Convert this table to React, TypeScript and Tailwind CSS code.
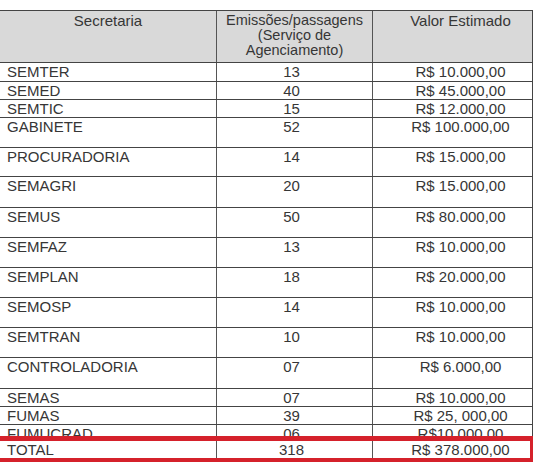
const rows: { name: string; qty: string; value: string; h: string }[] = [
  { name: "SEMTER", qty: "13", value: "R$ 10.000,00", h: "h-[19px]" },
  { name: "SEMED", qty: "40", value: "R$ 45.000,00", h: "h-[18px]" },
  { name: "SEMTIC", qty: "15", value: "R$ 12.000,00", h: "h-[18px]" },
  { name: "GABINETE", qty: "52", value: "R$ 100.000,00", h: "h-[30px]" },
  { name: "PROCURADORIA", qty: "14", value: "R$ 15.000,00", h: "h-[29px]" },
  { name: "SEMAGRI", qty: "20", value: "R$ 15.000,00", h: "h-[31px]" },
  { name: "SEMUS", qty: "50", value: "R$ 80.000,00", h: "h-[30px]" },
  { name: "SEMFAZ", qty: "13", value: "R$ 10.000,00", h: "h-[30px]" },
  { name: "SEMPLAN", qty: "18", value: "R$ 20.000,00", h: "h-[30px]" },
  { name: "SEMOSP", qty: "14", value: "R$ 10.000,00", h: "h-[30px]" },
  { name: "SEMTRAN", qty: "10", value: "R$ 10.000,00", h: "h-[30px]" },
  { name: "CONTROLADORIA", qty: "07", value: "R$ 6.000,00", h: "h-[31px]" },
  { name: "SEMAS", qty: "07", value: "R$ 10.000,00", h: "h-[18px]" },
  { name: "FUMAS", qty: "39", value: "R$ 25, 000,00", h: "h-[18px]" },
  { name: "FUMUCRAD", qty: "06", value: "R$10.000,00", h: "h-[16px]" },
  { name: "TOTAL", qty: "318", value: "R$ 378.000,00", h: "h-[19px]" },
]

function Row({ name, qty, value, h }: { name: string; qty: string; value: string; h: string }) {
  return (
    <div className={`flex ${h} overflow-hidden border-b border-[#444]`}>
      <div className="w-[217px] shrink-0 border-r border-[#555] pl-[7px] pt-[1px]">{name}</div>
      <div className="w-[156px] shrink-0 border-r border-[#555] pr-[6px] pt-[1px] text-center">{qty}</div>
      <div className="flex-1 pl-[16px] pt-[1px] text-center">{value}</div>
    </div>
  )
}

export default function App() {
  return (
    <div className="relative h-[462px] w-[534px] overflow-hidden bg-white pt-[10px] font-['Liberation_Sans',Arial,sans-serif] text-[15px] leading-[16px] text-[#363636]">
      <div className="w-[533px] border-t border-r border-[#444]">
        {/* Header */}
        <div className="flex h-[52px] border-b border-[#444] bg-[#d9d9d9]">
          <div className="w-[217px] shrink-0 border-r border-[#555] pt-[2px] text-center">Secretaria</div>
          <div className="flex w-[156px] shrink-0 flex-col items-center border-r border-[#555] pt-[2px] text-[14.5px] leading-[15px]">
            <span>Emissões/passagens</span>
            <span>(Serviço de</span>
            <span>Agenciamento)</span>
          </div>
          <div className="flex-1 pl-[16px] pt-[2px] text-center">Valor Estimado</div>
        </div>

        {rows.map((r) => (
          <Row key={r.name} {...r} />
        ))}
      </div>

      {/* red highlight round the total */}
      <div className="absolute left-0 top-[436px] h-[26px] w-[533px] border-t-[5px] border-r-[3px] border-b-[4px] border-[#d5212b]" />
    </div>
  )
}
